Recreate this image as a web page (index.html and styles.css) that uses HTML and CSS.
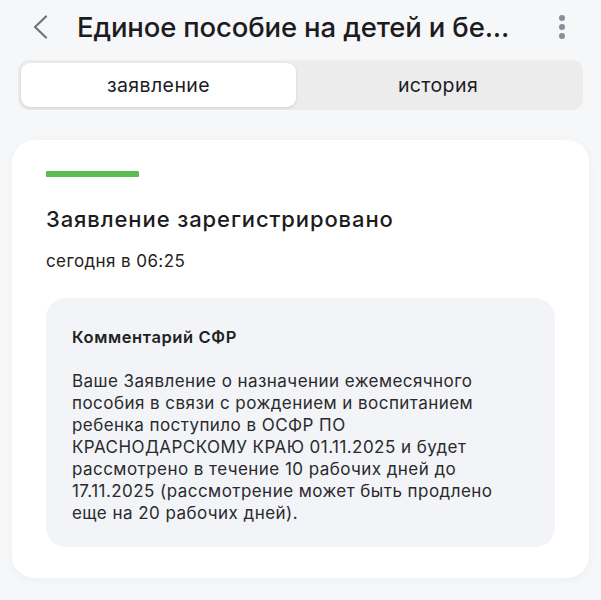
FILE: index.html
```html
<!DOCTYPE html>
<html lang="ru">
<head>
    <meta charset="UTF-8">
    <meta name="viewport" content="width=device-width, initial-scale=1.0">
    <title>Единое пособие</title>
    <link rel="stylesheet" href="styles.css">
</head>
<body>

<header class="topbar">
    <button class="back" aria-label="Назад">
        <svg width="16" height="24" viewBox="0 0 16 24"><path d="M14 1.5 L3 12 L14 22.5" fill="none" stroke="#6e7280" stroke-width="2.2" stroke-linecap="round" stroke-linejoin="round"/></svg>
    </button>
    <h1 class="title">Единое пособие на детей и бе...</h1>
    <button class="more" aria-label="Меню">
        <span></span><span></span><span></span>
    </button>
</header>

<div class="tabs">
    <div class="tab active">заявление</div>
    <div class="tab">история</div>
</div>

<section class="card">
    <div class="status-bar"></div>
    <h2 class="status-title">Заявление зарегистрировано</h2>
    <p class="status-date">сегодня в 06:25</p>

    <div class="comment">
        <h3>Комментарий СФР</h3>
        <p>Ваше Заявление о назначении ежемесячного пособия в связи с рождением и воспитанием ребенка поступило в ОСФР ПО КРАСНОДАРСКОМУ КРАЮ 01.11.2025 и будет рассмотрено в течение 10 рабочих дней до 17.11.2025 (рассмотрение может быть продлено еще на 20 рабочих дней).</p>
    </div>
</section>

</body>
</html>
```

FILE: styles.css
```css
* {
    margin: 0;
    padding: 0;
    box-sizing: border-box;
}
body {
    font-family: Inter, Roboto, 'Noto Sans', sans-serif;
    background-color: #f6f7f9;
    color: #1c1c1e;
    width: 601px;
    height: 600px;
    overflow: hidden;
}
.topbar {
    display: flex;
    align-items: center;
    height: 54px;
    padding: 0 0 0 32px;
}
.back {
    border: none;
    background: none;
    width: 16px;
    height: 24px;
    display: flex;
}
.title {
    font-size: 27.5px;
    font-weight: 500;
    margin-left: 29px;
    letter-spacing: -0.15px;
    color: #1c1c1e;
    white-space: nowrap;
}
.more {
    border: none;
    background: none;
    margin-left: auto;
    margin-right: 36px;
    display: flex;
    flex-direction: column;
    gap: 3px;
}
.more span {
    width: 6px;
    height: 6px;
    border-radius: 50%;
    background-color: #8a8d96;
}
.tabs {
    display: flex;
    margin: 6px 18px 0;
    height: 50px;
    padding: 3px;
    background-color: #ececed;
    border-radius: 11px;
}
.tab {
    flex: 1;
    display: flex;
    align-items: center;
    justify-content: center;
    font-size: 19.5px;
    letter-spacing: 0.4px;
    color: #1c1c1e;
    border-radius: 9px;
}
.tab.active {
    flex: 0 0 275px;
    background-color: #fff;
    box-shadow: 0 1px 3px rgba(0, 0, 0, 0.12);
}
.card {
    margin: 30px 12px 0;
    background-color: #fff;
    border-radius: 22px;
    padding: 31px 34px 31px;
    box-shadow: 0 2px 10px rgba(0, 0, 0, 0.04);
}
.status-bar {
    width: 93px;
    height: 6px;
    border-radius: 1px;
    background-color: #5bbd52;
}
.status-title {
    font-size: 22px;
    font-weight: 500;
    margin-top: 27px;
    line-height: 30px;
    letter-spacing: 0.9px;
}
.status-date {
    font-size: 17px;
    margin-top: 17px;
    line-height: 20px;
    letter-spacing: 0.4px;
    color: #222;
}
.comment {
    margin-top: 27px;
    background-color: #f2f4f8;
    border-radius: 20px;
    padding: 28px 26px 23px;
}
.comment h3 {
    font-size: 16.5px;
    font-weight: 600;
    line-height: 22px;
    letter-spacing: 0.6px;
    color: #222;
}
.comment p {
    max-width: 428px;
    margin-top: 22px;
    font-size: 17px;
    line-height: 22px;
    letter-spacing: 0.45px;
    color: #2a2a2c;
}
```
